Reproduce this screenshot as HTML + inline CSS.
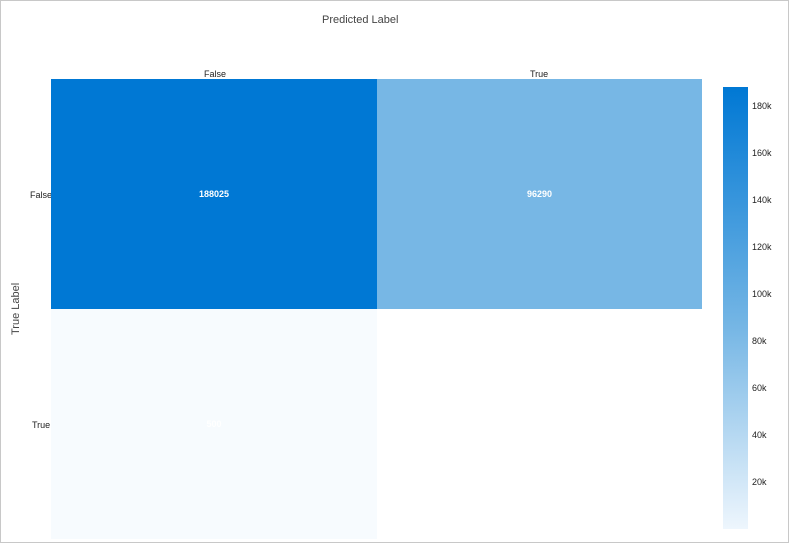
<!DOCTYPE html><html><head><style>
body{margin:0;width:789px;height:543px;overflow:hidden;background:#fff;font-family:"Liberation Sans",sans-serif;}
.f{position:absolute;left:0;top:0;width:787px;height:541px;border:1px solid #c8c8c8;}
.a{position:absolute;font-size:9px;color:#222;}
.c{position:absolute;display:flex;align-items:center;justify-content:center;color:#fff;font-size:9px;font-weight:bold;}
</style></head><body><div class="f"></div>
<div class="a" style="left:322px;top:14px;font-size:11px;color:#444">Predicted Label</div>
<div class="a" style="left:204px;top:69px">False</div>
<div class="a" style="left:530px;top:69px">True</div>
<div class="a" style="left:30px;top:190px">False</div>
<div class="a" style="left:32px;top:420px">True</div>
<div class="a" style="left:10px;top:335px;font-size:11px;color:#444;transform:rotate(-90deg);transform-origin:0 0">True Label</div>
<div class="c" style="left:51px;top:79px;width:326px;height:230px;background:#0078d4">188025</div>
<div class="c" style="left:377px;top:79px;width:325px;height:230px;background:#77b7e5">96290</div>
<div class="c" style="left:51px;top:309px;width:326px;height:230px;background:#f7fbfe;color:#fff">500</div>
<div style="position:absolute;left:723px;top:87px;width:25px;height:442px;background:linear-gradient(#0078d4,#77b7e5 55%,#eef6fd)"></div>
<div class="a" style="left:752px;top:101px">180k</div>
<div class="a" style="left:752px;top:148px">160k</div>
<div class="a" style="left:752px;top:195px">140k</div>
<div class="a" style="left:752px;top:242px">120k</div>
<div class="a" style="left:752px;top:289px">100k</div>
<div class="a" style="left:752px;top:336px">80k</div>
<div class="a" style="left:752px;top:383px">60k</div>
<div class="a" style="left:752px;top:430px">40k</div>
<div class="a" style="left:752px;top:477px">20k</div>
</body></html>
